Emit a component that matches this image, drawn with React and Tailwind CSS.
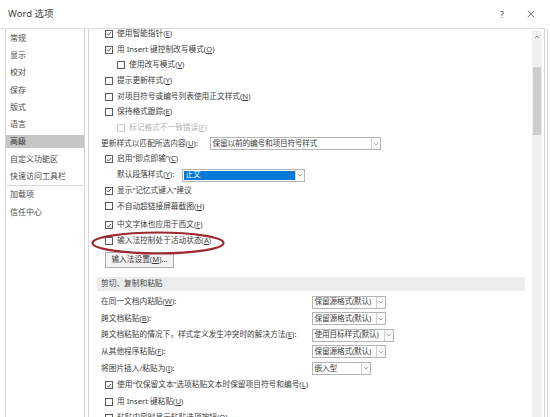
import React from 'react'

const navItems = ['常规', '显示', '校对', '保存', '版式', '语言', '高级', '自定义功能区', '快速访问工具栏']
const navBottom = ['加载项', '信任中心']

function Label({ text, k, tail = '' }) {
  // access key letter is underlined, like the Office dialogs
  if (!k) return <span>{text}</span>
  return (
    <span className="whitespace-nowrap">
      {text}(<span className="underline underline-offset-1">{k}</span>){tail}
    </span>
  )
}

function Box({ checked, disabled }) {
  return (
    <span
      className={`w-[8px] h-[8px] border shrink-0 bg-white flex items-center justify-center ${
        disabled ? 'border-[#cfcfcf]' : 'border-[#5a5a5a]'
      }`}
    >
      {checked && (
        <svg viewBox="0 0 8 8" className="w-[7px] h-[7px]">
          <path d="M1.2 4.1 L3.2 6 L6.9 1.8" fill="none" stroke="#333" strokeWidth="1.1" />
        </svg>
      )}
    </span>
  )
}

function CheckRow({ checked, disabled, indent, text, k, tall }) {
  return (
    <div
      className={`flex items-center gap-[4px] ${tall ? 'h-[16.6px]' : 'h-[15.7px]'} ${
        indent ? 'pl-[28px]' : 'pl-[16px]'
      } ${disabled ? 'text-[#b4b4b4]' : ''}`}
    >
      <Box checked={checked} disabled={disabled} />
      <Label text={text} k={k} />
    </div>
  )
}

function Chevron() {
  return (
    <svg viewBox="0 0 8 8" className="w-[6px] h-[6px]">
      <path d="M1.5 2.8 L4 5.3 L6.5 2.8" fill="none" stroke="#777" strokeWidth="0.9" />
    </svg>
  )
}

function Select({ value, width, blue }) {
  return (
    <div className={`h-[13px] flex border border-[#b4b4b4] bg-white ${width}`}>
      <div
        className={`flex-1 flex items-center pl-[1.5px] whitespace-nowrap overflow-hidden tracking-[-0.2px] ${
          blue ? 'bg-[#0a78d6] text-white m-[1px] mr-0' : ''
        }`}
      >
        {value}
      </div>
      <div className="w-[9px] shrink-0 flex items-center justify-center border-l border-[#d0d0d0] bg-[#fbfbfb]">
        <Chevron />
      </div>
    </div>
  )
}

function PasteRow({ text, k, select, width }) {
  return (
    <div className="h-[16.6px] flex items-center pl-[12px]">
      <div className="w-[211px] whitespace-nowrap">
        <Label text={text} k={k} tail=":" />
      </div>
      {select && <Select value={select} width={width} />}
    </div>
  )
}

export default function App() {
  return (
    <div className="w-[550px] h-[417px] overflow-hidden bg-white text-[#3c3c3c] font-['Noto_Sans','Noto_Sans_CJK_SC',sans-serif] leading-none">
      {/* Title bar */}
      <div className="h-[29px] flex items-center border-b border-[#dcdcdc] mr-[5px]">
        <span className="ml-[8px] text-[9.5px] text-[#444]">Word 选项</span>
        <span className="ml-auto text-[9px] text-[#555]">?</span>
        <svg viewBox="0 0 10 10" className="w-[8px] h-[8px] ml-[23px] mr-[10px]">
          <path d="M1 1 L9 9 M9 1 L1 9" stroke="#555" strokeWidth="1" />
        </svg>
      </div>

      <div className="flex h-[388px]">
        {/* Left navigation */}
        <div className="ml-[5px] w-[80px] border-l border-r border-[#d6d6d6] text-[8px] text-[#4a4a4a]">
          {navItems.map((item) => (
            <div key={item} className="h-[17.3px] py-[2px]">
              <div
                className={`h-full flex items-center pl-[4px] whitespace-nowrap ${
                  item === '高级' ? 'bg-[#c6c6c6] text-[#333]' : ''
                }`}
              >
                {item}
              </div>
            </div>
          ))}
          <div className="h-px bg-[#d6d6d6] mx-[1px]" />
          {navBottom.map((item) => (
            <div key={item} className="h-[17.3px] py-[2px]">
              <div className="h-full flex items-center pl-[4px]">{item}</div>
            </div>
          ))}
        </div>

        {/* Options panel */}
        <div className="ml-[3px] w-[457px] border-l border-r border-[#d6d6d6] flex relative">
          <div className="flex-1 overflow-hidden text-[7.7px] relative">
            <div className="-mt-[3px]">
              <CheckRow checked text="使用智能指针" k="E" />
              <CheckRow checked text="用 Insert 键控制改写模式" k="O" />
              <CheckRow indent text="使用改写模式" k="V" />
              <CheckRow text="提示更新样式" k="Y" />
              <CheckRow text="对项目符号或编号列表使用正文样式" k="N" />
              <CheckRow text="保持格式跟踪" k="E" />
              <CheckRow indent disabled text="标记格式不一致错误" k="F" />
              <div className="h-[15.7px] flex items-center pl-[12px]">
                <div className="w-[109px] whitespace-nowrap">
                  <Label text="更新样式以匹配所选内容" k="U" tail=":" />
                </div>
                <Select value="保留以前的编号和项目符号样式" width="w-[171px]" />
              </div>
              <CheckRow checked text="启用“即点即输”" k="C" />
              <div className="h-[15.7px] flex items-center pl-[28px]">
                <div className="w-[65px] whitespace-nowrap">
                  <Label text="默认段落样式" k="Y" tail=":" />
                </div>
                <Select value="正文" width="w-[123px]" blue />
              </div>
              <CheckRow checked text="显示“记忆式键入”建议" />
              <CheckRow text="不自动超链接屏幕截图" k="H" />
              <div className="mt-[3px]">
                <CheckRow checked text="中文字体也应用于西文" k="F" />
                <CheckRow text="输入法控制处于活动状态" k="A" />
              </div>
              <div className="mt-[3px] pl-[16px]">
                <button className="h-[16px] w-[69px] border border-[#adadad] bg-[#f3f3f3] flex items-center justify-center">
                  <Label text="输入法设置" k="M" tail="..." />
                </button>
              </div>

              {/* Cut, copy and paste */}
              <div className="mt-[9px] ml-[8px] w-[428px] h-[14px] bg-[#ededed] flex items-center pl-[4px] text-[#444]">
                剪切、复制和粘贴
              </div>
              <div className="mt-[3.2px]">
                <PasteRow text="在同一文档内粘贴" k="W" select="保留源格式(默认)" width="w-[74px]" />
                <PasteRow text="跨文档粘贴" k="B" select="保留源格式(默认)" width="w-[74px]" />
                <PasteRow
                  text="跨文档粘贴的情况下，样式定义发生冲突时的解决方法"
                  k="E"
                  select="使用目标样式(默认)"
                  width="w-[82px]"
                />
                <PasteRow text="从其他程序粘贴" k="F" select="保留源格式(默认)" width="w-[74px]" />
                <PasteRow text="将图片插入/粘贴为" k="I" select="嵌入型" width="w-[59px]" />
                <CheckRow tall checked text="使用“仅保留文本”选项粘贴文本时保留项目符号和编号" k="L" />
                <CheckRow tall text="用 Insert 键粘贴" k="U" />
                <CheckRow tall text="粘贴内容时显示粘贴选项按钮" k="O" />
              </div>
            </div>

            {/* red highlight ring drawn over the option */}
            <svg
              className="absolute left-[2px] top-[202px] w-[134px] h-[24px] pointer-events-none"
              viewBox="0 0 134 24"
            >
              <ellipse cx="67" cy="12" rx="65.5" ry="10.5" fill="none" stroke="#9c2a30" strokeWidth="2.2" />
            </svg>
          </div>

          {/* Scrollbar */}
          <div className="w-[10px] mr-[2px] mt-[2px] bg-[#f0f0f0] flex flex-col items-center">
            <svg viewBox="0 0 8 8" className="w-[6px] h-[6px] mt-[3px]">
              <path d="M1.5 5.2 L4 2.7 L6.5 5.2" fill="none" stroke="#666" strokeWidth="1" />
            </svg>
            <div className="w-[8px] h-[68px] mt-[27px] bg-[#cdcdcd]" />
          </div>
        </div>
        <div className="w-[2px]" />
        <div className="w-px bg-[#c9d6e3]" />
      </div>
    </div>
  )
}
